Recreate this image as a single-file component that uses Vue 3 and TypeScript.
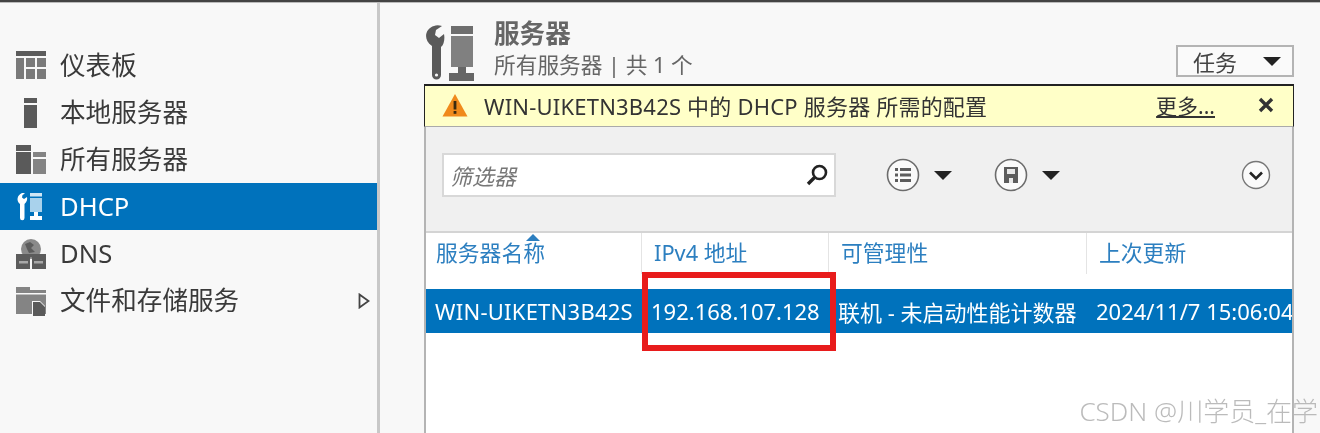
<script setup lang="ts">
const navItems = [
  { id: 'dashboard', label: '仪表板' },
  { id: 'local', label: '本地服务器' },
  { id: 'all', label: '所有服务器' },
  { id: 'dhcp', label: 'DHCP', active: true },
  { id: 'dns', label: 'DNS' },
  { id: 'files', label: '文件和存储服务', more: true },
]

const columns = ['服务器名称', 'IPv4 地址', '可管理性', '上次更新']
const row = ['WIN-UIKETN3B42S', '192.168.107.128', '联机 - 未启动性能计数器', '2024/11/7 15:06:04']
</script>

<template>
  <div class="window">
    <div class="topbar"></div>
    <div class="content">
      <aside class="sidebar">
        <div
          v-for="item in navItems"
          :key="item.id"
          class="nav-item"
          :class="{ active: item.active }"
        >
          <svg class="nav-icon" viewBox="0 0 30 30" width="30" height="30">
            <g v-if="item.id === 'dashboard'" fill="#7a7a7a">
              <rect x="0" y="0" width="30" height="5" fill="#5c5c5c" />
              <rect x="0" y="7" width="8" height="21" />
              <rect x="10" y="7" width="9" height="9" />
              <rect x="21" y="7" width="9" height="9" />
              <rect x="10" y="18" width="9" height="10" />
              <rect x="21" y="18" width="9" height="10" />
            </g>
            <g v-else-if="item.id === 'local'" fill="#5a5a5a">
              <rect x="8" y="0" width="13" height="5" />
              <rect x="8" y="7" width="13" height="23" />
            </g>
            <g v-else-if="item.id === 'all'">
              <rect x="0" y="0" width="15" height="6" fill="#5a5a5a" />
              <rect x="0" y="7" width="15" height="22" fill="#5a5a5a" />
              <rect x="17" y="7" width="13" height="5" fill="#848484" />
              <rect x="17" y="14" width="13" height="15" fill="#848484" />
            </g>
            <g v-else-if="item.id === 'dhcp'" fill="#fff">
              <path d="M6 1 C1 3 0 9 4 12 L4 26 A2.2 2.2 0 0 0 8.5 26 L8.5 12 C11 10 11.5 7 11 5 L8 7 L6 5.5 L6.5 3 L9 1.5 C8 1 7 1 6 1Z" />
              <rect x="14" y="1" width="12" height="3.5" fill="#cfe6f5" />
              <rect x="14" y="6" width="12" height="14" fill="#a9d2ec" />
              <path d="M18 20 h4 v4 h4 v4 h-12 v-4 h4z" />
            </g>
            <g v-else-if="item.id === 'dns'">
              <circle cx="15" cy="10" r="10" fill="#8a8a8a" />
              <path d="M9 5 L14 3 L18 6 L15 9 L19 13 L13 14 L11 10Z" fill="#5c5c5c" />
              <rect x="0" y="15" width="30" height="3" fill="#5c5c5c" />
              <rect x="0" y="18" width="14" height="12" fill="#5c5c5c" />
              <rect x="16" y="18" width="14" height="12" fill="#5c5c5c" />
              <rect x="3" y="22" width="9" height="2.5" fill="#a8a8a8" />
              <rect x="18" y="22" width="9" height="2.5" fill="#a8a8a8" />
            </g>
            <g v-else>
              <path d="M0 1 h14 v3 h16 v24 h-30z" fill="#848484" />
              <rect x="0" y="7" width="30" height="1.5" fill="#f8f8f8" />
              <path d="M16 15 h8 l5 5 v10 h-13z" fill="#f8f8f8" />
              <path d="M17 16 h7 l5 5 v9 h-12z" fill="#5a5a5a" />
            </g>
          </svg>
          <span class="nav-label">{{ item.label }}</span>
          <svg v-if="item.more" class="nav-arrow" viewBox="0 0 12 16" width="12" height="16">
            <path d="M1.5 1.5 L10.5 8 L1.5 14.5Z" fill="none" stroke="#444" stroke-width="1.8" />
          </svg>
        </div>
      </aside>

      <main class="main">
        <header class="header">
          <svg class="header-icon" viewBox="0 0 50 56" width="50" height="56">
            <path
              d="M10 1 C2 3 -2 14 8 21 L8 50 A4.5 4.5 0 0 0 17 50 L17 22 C20 20 21 14 20 9 L15 13 L11 10 L12 5 L18 1 C15 0 12 0 10 1Z"
              fill="#5a5a5a"
            />
            <circle cx="12.5" cy="50" r="1.6" fill="#f8f8f8" />
            <rect x="27" y="1" width="22" height="8" fill="#6e6e6e" />
            <rect x="27" y="11" width="22" height="31" fill="#808080" />
            <path d="M34 42 h8 v6 h8 v8 h-25 v-8 h9z" fill="#666" />
          </svg>
          <div class="titles">
            <h1 class="title">服务器</h1>
            <p class="subtitle">所有服务器 | 共 1 个</p>
          </div>
          <button class="tasks">
            <span>任务</span>
            <i class="caret"></i>
          </button>
        </header>

        <div class="banner">
          <svg class="warn" viewBox="0 0 26 24" width="26" height="24">
            <path d="M13 1 L25.5 23.5 H0.5Z" fill="#f08a1c" />
            <rect x="11.6" y="8" width="2.8" height="8.5" fill="#3a2a10" />
            <rect x="11.6" y="18" width="2.8" height="2.8" fill="#3a2a10" />
          </svg>
          <span class="banner-text">WIN-UIKETN3B42S 中的 DHCP 服务器 所需的配置</span>
          <a class="banner-more">更多...</a>
          <svg class="banner-close" viewBox="0 0 16 16" width="16" height="16">
            <path d="M2 2 L14 14 M14 2 L2 14" stroke="#333" stroke-width="3.4" />
          </svg>
        </div>

        <section class="panel">
          <div class="toolbar">
            <div class="filter">
              <span class="filter-text">筛选器</span>
              <svg viewBox="0 0 24 24" width="24" height="24">
                <circle cx="14.5" cy="9.5" r="6.5" fill="none" stroke="#222" stroke-width="2.6" />
                <path d="M9.5 14.5 L3 21" stroke="#222" stroke-width="3.4" />
              </svg>
            </div>
            <div class="tool tool-first">
              <svg viewBox="0 0 34 34" width="34" height="34">
                <circle cx="17" cy="17" r="15.5" fill="#fafafa" stroke="#6c6c6c" stroke-width="1.6" />
                <g fill="#5c5c5c">
                  <rect x="9" y="10" width="3" height="3" />
                  <rect x="14" y="10" width="11" height="3" />
                  <rect x="9" y="15.5" width="3" height="3" />
                  <rect x="14" y="15.5" width="11" height="3" />
                  <rect x="9" y="21" width="3" height="3" />
                  <rect x="14" y="21" width="11" height="3" />
                </g>
              </svg>
              <i class="caret"></i>
            </div>
            <div class="tool tool-second">
              <svg viewBox="0 0 34 34" width="34" height="34">
                <circle cx="17" cy="17" r="15.5" fill="#fafafa" stroke="#6c6c6c" stroke-width="1.6" />
                <path d="M10 9 h14 v16 h-14z" fill="#5c5c5c" />
                <rect x="13" y="11" width="8" height="5" fill="#e8e8e8" />
                <rect x="15" y="20" width="4" height="5" fill="#e8e8e8" />
              </svg>
              <i class="caret"></i>
            </div>
            <svg class="expand" viewBox="0 0 30 30" width="30" height="30">
              <circle cx="15" cy="15" r="13.5" fill="#fafafa" stroke="#777" stroke-width="1.4" />
              <path d="M9 12.5 L15 18.5 L21 12.5" fill="none" stroke="#222" stroke-width="2.6" />
            </svg>
          </div>

          <div class="table">
            <div class="thead">
              <div v-for="col in columns" :key="col" class="th">{{ col }}</div>
              <i class="sort"></i>
            </div>
            <div class="tr">
              <div v-for="cell in row" :key="cell" class="td">{{ cell }}</div>
            </div>
            <div class="callout"></div>
          </div>
        </section>
      </main>
    </div>
    <div class="watermark">CSDN @川学员_在学</div>
  </div>
</template>

<style>
html,
body {
  margin: 0;
  background: #fff;
}
</style>

<style scoped>
.window {
  position: relative;
  width: 1320px;
  height: 433px;
  overflow: hidden;
  background: #f8f8f8;
  color: #333;
  font-family: "Noto Sans", "Noto Sans CJK SC", sans-serif;
  filter: blur(0.4px);
}

.topbar {
  height: 3px;
  background: #444;
  border-bottom: 1px solid #bbb;
  box-sizing: border-box;
}

.content {
  display: flex;
  height: 430px;
}

.sidebar {
  width: 377px;
  flex: none;
  padding-top: 39px;
  box-sizing: content-box;
  border-right: 3px solid #c8c8c8;
}

.nav-item {
  display: flex;
  align-items: center;
  gap: 14px;
  height: 47px;
  padding: 0 7px 0 16px;
  font-size: 25.6px;
  color: #3a3a3a;
}

.nav-item.active {
  background: #0072bc;
  color: #fff;
}

.nav-icon {
  flex: none;
}

.nav-label {
  flex: 1;
  line-height: 1;
}

.main {
  flex: 1;
  padding: 0 26px 0 44px;
  min-width: 0;
}

.header {
  display: flex;
  align-items: flex-end;
  height: 81px;
  box-sizing: border-box;
}

.header-icon {
  flex: none;
  margin-bottom: 3px;
}

.titles {
  flex: 1;
  margin-left: 20px;
  margin-bottom: 5px;
}

.title {
  margin: 0;
  font-size: 25.6px;
  line-height: 34px;
  font-weight: 700;
  color: #666;
}

.subtitle {
  margin: 0;
  font-size: 21.7px;
  line-height: 28px;
  color: #666;
}

.tasks {
  display: flex;
  align-items: center;
  justify-content: space-between;
  width: 118px;
  height: 32px;
  margin-bottom: 7px;
  padding: 0 11px 0 15px;
  border: 2px solid #b4b4b4;
  background: #fafafa;
  box-sizing: border-box;
  font: inherit;
  font-size: 22px;
  color: #444;
}

.caret {
  display: block;
  width: 0;
  height: 0;
  border-left: 9.5px solid transparent;
  border-right: 9.5px solid transparent;
  border-top: 9px solid #222;
}

.banner {
  display: flex;
  align-items: center;
  height: 43px;
  padding: 0 19px 3px 17px;
  background: #ffffc8;
  border: 1px solid #222;
  border-top-width: 2px;
  border-bottom: 1px solid #aaa;
  box-sizing: border-box;
  font-size: 22px;
  color: #333;
}

.warn {
  flex: none;
}

.banner-text {
  flex: 1;
  margin-left: 16px;
  letter-spacing: 0.2px;
}

.banner-more {
  font-size: 21px;
  text-decoration: underline;
  margin-right: 43px;
}

.panel {
  border-left: 2px solid #b4b4b4;
  border-right: 2px solid #b4b4b4;
  background: #fff;
  height: 306px;
}

.toolbar {
  position: relative;
  display: flex;
  align-items: center;
  height: 106px;
  padding: 0 0 8px 16px;
  box-sizing: border-box;
  background: #f0f0f0;
  border-bottom: 2px solid #d4d4d4;
}

.filter {
  display: flex;
  align-items: center;
  justify-content: space-between;
  width: 394px;
  height: 44px;
  padding: 0 5px 0 6px;
  box-sizing: border-box;
  background: #fff;
  border: 2px solid #d8d8d8;
}

.filter-text {
  font-size: 22px;
  font-style: italic;
  color: #777;
}

.tool {
  display: flex;
  align-items: center;
  gap: 14px;
}

.tool-first {
  margin-left: 50px;
}

.tool-second {
  margin-left: 42px;
}

.expand {
  margin-left: auto;
  margin-right: 21px;
}

.table {
  position: relative;
}

.thead,
.tr {
  display: grid;
  grid-template-columns: 215px 187px 258px 1fr;
}

.thead {
  position: relative;
  height: 56px;
}

.th {
  padding: 5px 0 0 10px;
  font-size: 21.8px;
  line-height: 30px;
  color: #2c7fc0;
  white-space: nowrap;
}

.th + .th {
  padding-left: 12px;
  border-left: 1px solid #e4e4e4;
  height: 36px;
}

.sort {
  position: absolute;
  left: 100px;
  top: 1px;
  width: 0;
  height: 0;
  border-left: 7px solid transparent;
  border-right: 7px solid transparent;
  border-bottom: 7px solid #2c7fc0;
}

.tr {
  height: 44px;
  align-items: center;
  background: #0072bc;
  color: #fff;
  font-size: 22px;
  white-space: nowrap;
  overflow: hidden;
}

.td {
  padding-left: 9px;
  overflow: hidden;
}

.td:first-child {
  letter-spacing: 0.25px;
}

.td + .td {
  padding-left: 10px;
}

.callout {
  position: absolute;
  left: 216px;
  top: 39px;
  width: 194px;
  height: 79px;
  box-sizing: border-box;
  border: 6px solid #e81c1c;
}

.watermark {
  position: absolute;
  right: 2px;
  bottom: 6px;
  font-size: 26px;
  line-height: 32px;
  font-weight: 300;
  color: rgba(120, 120, 120, 0.5);
  text-shadow: 0 0 1px rgba(255, 255, 255, 0.7);
  white-space: nowrap;
}
</style>
